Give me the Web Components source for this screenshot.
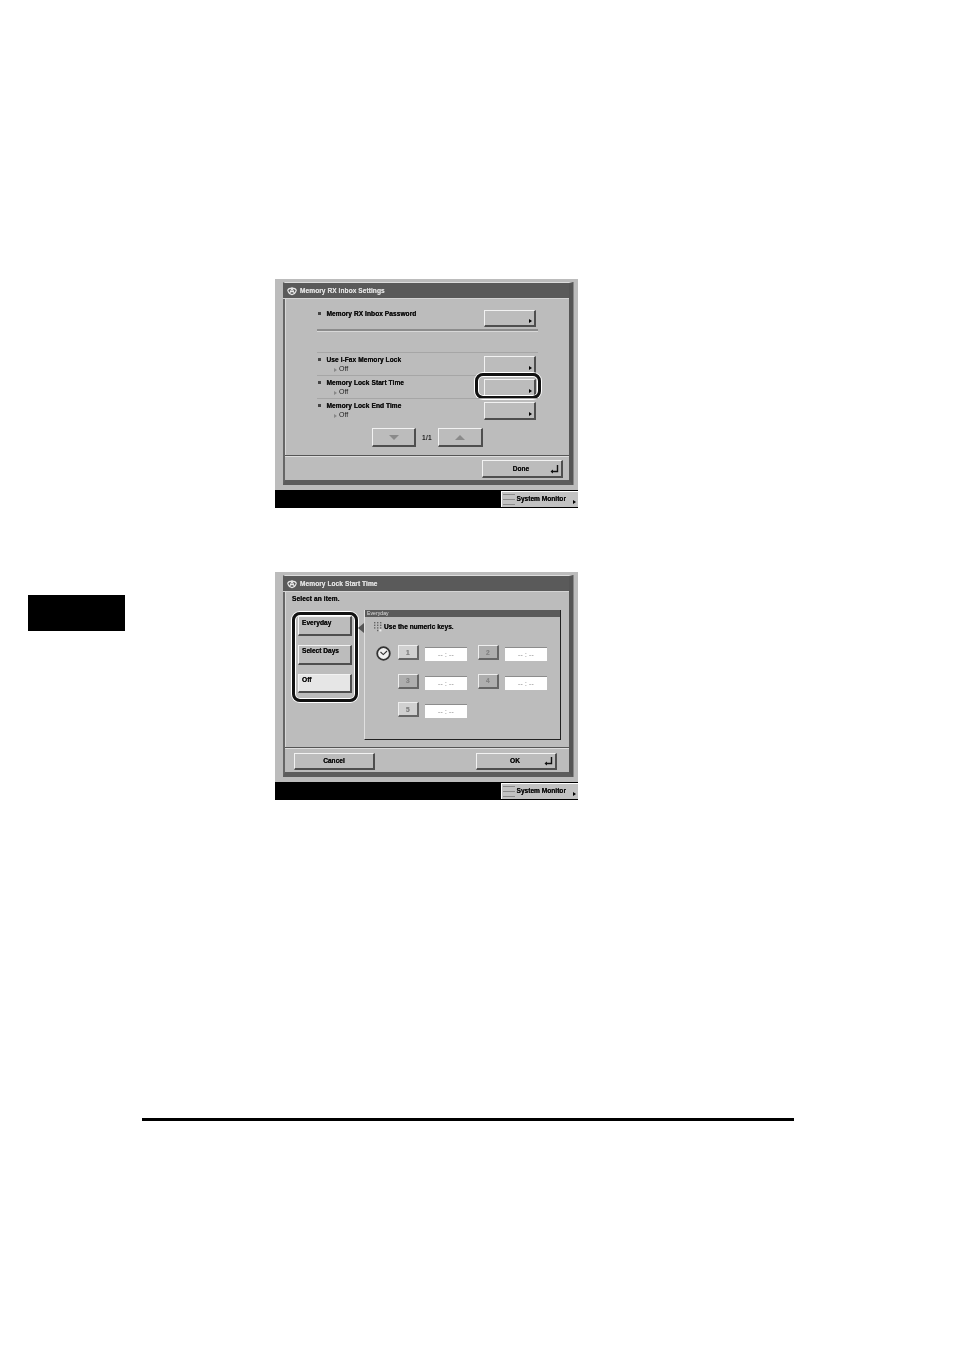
<!DOCTYPE html>
<html><head><meta charset="utf-8"><style>
html,body{margin:0;background:#fff}
body{width:954px;height:1350px;overflow:hidden;font-family:"Liberation Sans",Arial,sans-serif}
</style></head><body>
<x-page>
  <x-screen slot="first" heading="Memory RX Inbox Settings" style="height:229px;--foot:25px;--footr:6px">
    <x-settings>
      <x-row label="Memory RX Inbox Password" main></x-row>
      <x-row label="Use I-Fax Memory Lock" value="Off"></x-row>
      <x-row label="Memory Lock Start Time" value="Off" focus></x-row>
      <x-row label="Memory Lock End Time" value="Off"></x-row>
      <x-pager></x-pager>
    </x-settings>
    <x-btn slot="foot" w="81" h="18" enter>Done</x-btn>
  </x-screen>
  <x-screen slot="second" heading="Memory Lock Start Time" style="height:228px;--foot:25px;--footr:12px">
    <x-timeform></x-timeform>
    <x-btn slot="footleft" w="81" h="17">Cancel</x-btn>
    <x-btn slot="foot" w="81" h="17" enter>OK</x-btn>
  </x-screen>
</x-page>
<script>
const FONT='"Liberation Sans",Arial,sans-serif';
function el(name,html){customElements.define(name,class extends HTMLElement{
  connectedCallback(){ if(this.shadowRoot) return; this.attachShadow({mode:'open'}).innerHTML=html(this); }
});}
const attr=(h,k,d='')=>h.getAttribute(k)??d;

el('x-page',()=>`<style>
:host{display:block;position:relative;width:954px;height:1350px;background:#fff}
.wrap{display:flex;flex-direction:column;padding:279px 0 0 275px;gap:64px;width:303px}
.tab{position:absolute;left:28px;top:595px;width:97px;height:36px;background:#000}
.rule{position:absolute;left:142px;top:1118px;width:652px;height:3px;background:#000}
</style><div class="wrap"><slot name="first"></slot><slot name="second"></slot></div>
<div class="tab"></div><div class="rule"></div>`);

el('x-mark',()=>`<style>:host{display:inline-flex;width:10px;height:10px}svg{display:block}</style>
<svg width="10" height="10" viewBox="0 0 10 10" fill="none" stroke="#e8e8e8" stroke-width="1.1">
<path d="M.7 4.2C2 1.4 8 1.4 9.3 4.2 8.6 7 6.8 8.4 5 8.6 3.2 8.4 1.4 7 .7 4.2z"/><path d="M2.4 8 5 2.2 7.6 8M3.4 5.6h3.2"/></svg>`);

el('x-screen',h=>`<style>
:host{display:flex;flex-direction:column;width:303px;background:#bcbcbc;filter:blur(.3px)}
.body{flex:1;min-height:0;display:flex;padding:4px 5px 5px 8px}
.win{flex:1;display:flex;flex-direction:column;border-left:2px solid #666;border-right:4px solid #555;border-bottom:5px solid #5c5c5c;border-top:1px solid #ddd;margin-top:-1px;min-width:0;box-shadow:1px 0 0 #888}
.title{height:15px;background:#5a5a5a;color:#dcdcdc;display:flex;align-items:center;gap:3px;padding-left:4px;font:bold 6.6px ${FONT};letter-spacing:.05px;text-shadow:0 0 .4px currentColor;border-bottom:1px solid #d4d4d4;margin-left:-2px}
.main{flex:1;min-height:0;background:#bcbcbc;border-left:1px solid #d8d8d8;display:flex;flex-direction:column}
.foot{height:var(--foot);flex:none;border-top:1px solid #555;box-shadow:inset 0 1px 0 #ddd;display:flex;align-items:center;justify-content:space-between;padding:2px var(--footr) 0 9px;background:#bcbcbc;box-sizing:border-box}
.bar{height:18px;flex:none;background:#000;display:flex;justify-content:flex-end;align-items:center}
</style>
<div class="body"><div class="win">
<div class="title"><x-mark></x-mark><span>${attr(h,'heading')}</span></div>
<div class="main"><slot></slot></div>
<div class="foot"><span><slot name="footleft"></slot></span><span><slot name="foot"></slot></span></div>
</div></div>
<div class="bar"><x-sysmon></x-sysmon></div>`);

el('x-sysmon',()=>`<style>
:host{display:flex;align-items:center;width:77px;height:16px;padding-bottom:2px;background:#c2c2c2;border-top:1px solid #fff;border-left:1px solid #fff;box-sizing:border-box;color:#111;font:bold 6.6px ${FONT};text-shadow:0 0 .4px currentColor;position:relative}
svg{flex:none;margin:1px 1.5px 0 1px}
i{position:absolute;right:2px;bottom:3px;border-left:3px solid #000;border-top:2.5px solid transparent;border-bottom:2.5px solid transparent}
</style><svg width="12" height="11" viewBox="0 0 12 11" fill="none" stroke="#8a8a8a"><path d="M0 .5h12M0 5.5h12M0 10.5h12"/></svg><span>System Monitor</span><i></i>`);

el('x-btn',h=>{
 const w=attr(h,'w',52),ht=attr(h,'h',17),on=h.hasAttribute('on'),enter=h.hasAttribute('enter');
 return `<style>
:host{display:block;width:${w}px;height:${ht}px}
.b{box-sizing:border-box;width:100%;height:100%;position:relative;display:flex;align-items:center;justify-content:center;padding-right:${enter?2:0}px;background:${on?'#e6e6e6':'#bcbcbc'};border-top:1px solid #f2f2f2;border-left:1px solid #f2f2f2;border-right:2px solid #4e4e4e;border-bottom:2px solid #4e4e4e;color:#111;font:bold 6.6px ${FONT};text-shadow:0 0 .4px currentColor}
.arrow{position:absolute;right:2px;bottom:2px;border-left:3px solid #000;border-top:2.5px solid transparent;border-bottom:2.5px solid transparent}
svg{position:absolute;right:2px;bottom:2px}
</style><div class="b"><slot></slot>${h.hasAttribute('more')?'<i class="arrow"></i>':''}${enter?'<svg width="9" height="9" viewBox="0 0 9 9" fill="none" stroke="#111" stroke-width="1.4"><path d="M7.5 0v6.5H1.5"/><path d="M3 4.5v4L.5 6.5z" fill="#111" stroke="none"/></svg>':''}</div>`;
});

el('x-settings',()=>`<style>:host{display:flex;flex-direction:column;padding:11px 31px 0 31px;height:100%;box-sizing:border-box}
::slotted(x-row:first-child){margin-bottom:21px}</style><slot></slot>`);

el('x-row',h=>{
 const main=h.hasAttribute('main'),focus=h.hasAttribute('focus'),v=attr(h,'value');
 return `<style>
:host{display:flex;justify-content:space-between;box-sizing:border-box;position:relative;${main?'height:21px;border-bottom:2px solid #8c8c8c;box-shadow:0 1px 0 #d8d8d8':'height:23px;border-top:1px solid #a6a6a6;padding-top:3px'}}
.l{color:#111;font:bold 6.6px ${FONT};letter-spacing:.05px;text-shadow:0 0 .4px currentColor;padding-left:1px;line-height:8px}
.l b{display:inline-block;width:3px;height:3px;background:#444;margin-right:5.5px;vertical-align:1px}
.v{font-weight:normal;font-size:7px;padding-left:16px;line-height:10px;color:#222;text-shadow:none}
.v i{display:inline-block;border-left:3px solid #888;border-top:2.5px solid transparent;border-bottom:2.5px solid transparent;margin-right:2px;vertical-align:-.5px}
x-btn{margin-right:2px}
.f{position:absolute;right:-3px;top:-3px;width:66px;height:26px;box-sizing:border-box;border:3px solid #111;border-radius:8px;box-shadow:0 0 0 1px #fff,inset 0 0 0 1px #fff}
</style><div class="l"><b></b>${attr(h,'label')}${v?`<div class="v"><i></i>${v}</div>`:''}</div>
<x-btn w="52" h="${main?17:18}" more></x-btn>${focus?'<div class="f"></div>':''}`});

el('x-pager',()=>`<style>
:host{display:flex;align-items:center;gap:5px;padding-left:55px;margin-top:7px;color:#222;font:bold 6.6px ${FONT}}
span{width:12px;text-align:center;letter-spacing:.3px}
i{display:block;width:0;border-left:5px solid transparent;border-right:5px solid transparent}
.d{border-top:5px solid #8a8a8a}.u{border-bottom:5px solid #8a8a8a}
</style><x-btn w="44" h="19"><i class="d"></i></x-btn><span>1/1</span><x-btn w="45" h="19"><i class="u"></i></x-btn>`);

el('x-keypad',()=>`<style>:host{display:inline-flex}</style><svg width="8" height="10" viewBox="0 0 8 10" fill="#666"><rect x="0" y="0" width="1.4" height="1.4"/><rect x="3" y="0" width="1.4" height="1.4"/><rect x="6" y="0" width="1.4" height="1.4"/><rect x="0" y="2.6" width="1.4" height="1.4"/><rect x="3" y="2.6" width="1.4" height="1.4"/><rect x="6" y="2.6" width="1.4" height="1.4"/><rect x="0" y="5.2" width="1.4" height="1.4"/><rect x="3" y="5.2" width="1.4" height="1.4"/><rect x="6" y="5.2" width="1.4" height="1.4"/><rect x="3" y="7.8" width="1.4" height="1.4"/><rect x="5.4" y="7.4" width="2" height="2" fill="#eee"/></svg>`);

el('x-clock',()=>`<style>:host{display:inline-flex;width:15px;height:15px}</style><svg width="15" height="15" viewBox="0 0 15 15"><circle cx="7.5" cy="7.5" r="6.3" fill="#f0f0f0" stroke="#333" stroke-width="1.8"/><path d="M4.5 6 7.3 8.6 11 5" fill="none" stroke="#333" stroke-width="1.1"/></svg>`);

el('x-slot',h=>`<style>
:host{display:flex;align-items:flex-start;gap:6px;width:80px}
.k{width:21px;height:15px;box-sizing:border-box;background:${h.hasAttribute('on')?'#d0d0d0':'#aeaeae'};border-top:1px solid #eee;border-left:1px solid #eee;border-right:2px solid #666;border-bottom:2px solid #666;color:#868686;font:bold 6.6px ${FONT};display:flex;align-items:center;justify-content:center}
.t{width:42px;height:14px;margin-top:2px;box-sizing:border-box;background:#fff;border-top:1px solid #8c8c8c;color:#aaa;font:6.4px ${FONT};display:flex;align-items:center;justify-content:center;letter-spacing:.3px}
</style><div class="k">${attr(h,'n')}</div><div class="t">-- : --</div>`);

el('x-timeform',()=>`<style>
:host{display:flex;flex-direction:column;height:100%;box-sizing:border-box;padding:3px 0 0 6px;color:#111;font:bold 6.6px ${FONT};letter-spacing:.1px;text-shadow:0 0 .4px currentColor}
.sel{line-height:8px;margin-bottom:8px}
.cols{display:flex;align-items:flex-start}
.hl{box-sizing:border-box;width:66px;height:90px;margin-top:1px;border:3px solid #111;border-radius:8px;box-shadow:0 0 0 1px #fff,inset 0 0 0 1px #fff;padding:1px 0 0 3px;display:flex;flex-direction:column;gap:9px}
.hl span{display:block;width:50px;margin-top:-7px;padding-left:3px;letter-spacing:0}
.arrow{width:0;border-right:6px solid #555;border-top:5px solid transparent;border-bottom:5px solid transparent;margin-top:12px;flex:none}
.panel{box-sizing:border-box;width:197px;height:130px;margin-top:-1px;border-left:1px solid #e0e0e0;border-right:1px solid #222;border-bottom:1px solid #222;display:flex;flex-direction:column}
.ph{height:7px;background:#5a5a5a;color:#e0e0e0;font:normal 5px/7px ${FONT};padding-left:2px;text-shadow:none}
.hint{display:flex;align-items:center;gap:2px;padding:3px 0 0 9px;height:13px;line-height:10px;letter-spacing:0}
.row{display:flex;gap:7px;padding-left:11px;margin-top:12px}
.row x-clock{margin-top:1px}
.lines{display:grid;grid-template-columns:80px 80px;row-gap:12.5px}
</style>
<div class="sel">Select an item.</div>
<div class="cols">
 <div class="hl">
  <x-btn w="54" h="20"><span>Everyday</span></x-btn>
  <x-btn w="54" h="20"><span style="margin-top:-8px">Select Days</span></x-btn>
  <x-btn w="54" h="19" on><span>Off</span></x-btn>
 </div>
 <div class="arrow"></div>
 <div class="panel">
  <div class="ph">Everyday</div>
  <div class="hint"><x-keypad></x-keypad><span>Use the numeric keys.</span></div>
  <div class="row"><x-clock></x-clock>
   <div class="lines">
    <x-slot n="1" on></x-slot><x-slot n="2"></x-slot>
    <x-slot n="3"></x-slot><x-slot n="4"></x-slot>
    <x-slot n="5" on></x-slot>
   </div>
  </div>
 </div>
</div>`);
</script>
</body></html>
